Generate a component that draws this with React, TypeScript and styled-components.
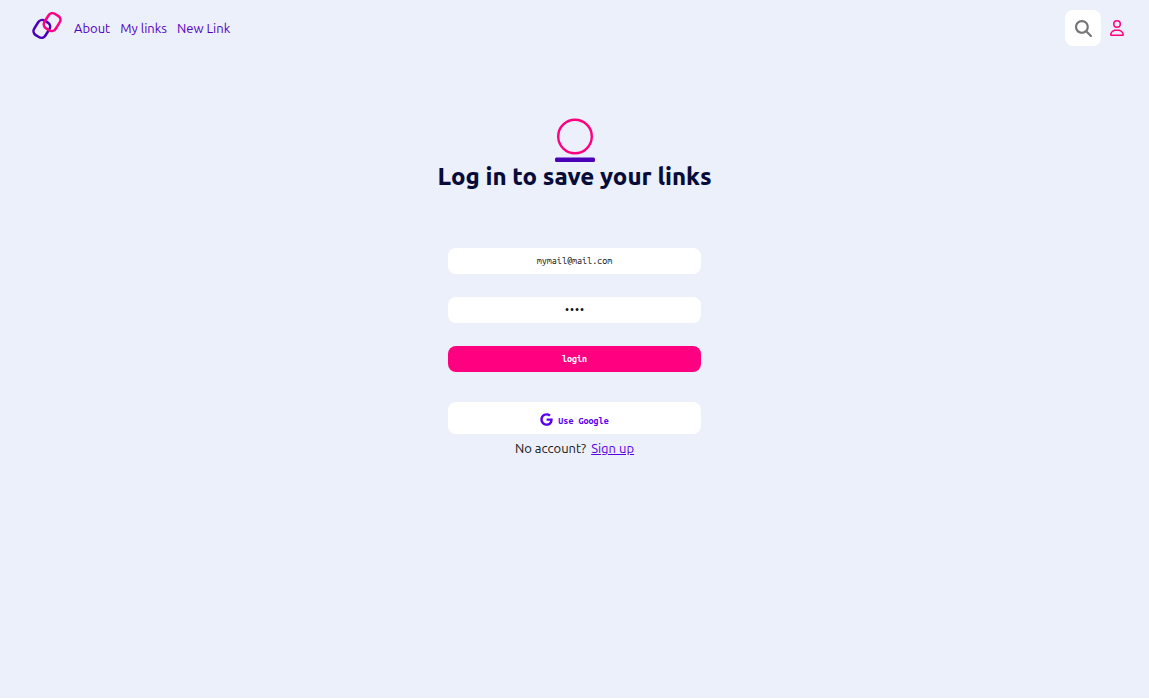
import React from "react";
import styled, { createGlobalStyle } from "styled-components";
import { FaGoogle, FaMagnifyingGlass, FaRegUser } from "react-icons/fa6";

const GlobalStyle = createGlobalStyle`
  * { box-sizing: border-box; }
  body {
    margin: 0;
    background: #fff;
    color: #151515;
    font-family: Ubuntu, "Noto Sans", sans-serif;
    font-size: 13px;
    line-height: 20px;
  }
`;

const Page = styled.div`
  min-height: calc(100vh - 1px);
  background: #ebf0fb;
`;

const Header = styled.header`
  display: flex;
  align-items: center;
  justify-content: space-between;
  height: 56px;
  padding: 0 24px 0 32px;
`;

const Nav = styled.nav`
  display: flex;
  align-items: center;
  gap: 10px;
`;

const NavLink = styled.a`
  color: #5300bf;
  text-decoration: none;
`;

const HomeLink = styled.a`
  display: flex;
  margin-bottom: 4px;
  margin-right: 2px;
`;

const Tools = styled.div`
  display: flex;
  align-items: center;
  gap: 8px;
`;

const SearchButton = styled.button`
  display: grid;
  place-items: center;
  width: 36px;
  height: 36px;
  padding: 0;
  border: 0;
  border-radius: 8px;
  background: #fff;
  color: #757575;
  font-size: 17px;
`;

const AccountLink = styled.a`
  display: flex;
  color: #ff0080;
  font-size: 16px;
`;

const Main = styled.main`
  display: flex;
  flex-direction: column;
  align-items: center;
  padding: 62px 16px 0;
`;

const Title = styled.h1`
  margin: 0;
  color: #080c38;
  font-size: 24px;
  font-weight: 800;
  line-height: 30px;
  text-align: center;
`;

const Form = styled.form`
  display: flex;
  flex-direction: column;
  gap: 23px;
  width: 100%;
  max-width: 253px;
  margin-top: 56px;
`;

const Field = styled.input`
  width: 100%;
  height: 26px;
  padding: 0 8px;
  border: 0;
  border-radius: 8px;
  background: #fff;
  color: #151515;
  font-family: "Ubuntu Mono", "DejaVu Sans Mono", monospace;
  font-size: 9px;
  text-align: center;
`;

const Button = styled.button<{ $variant: "primary" | "plain" }>`
  display: flex;
  align-items: baseline;
  justify-content: center;
  gap: 5px;
  width: 100%;
  height: ${(p) => (p.$variant === "primary" ? "26px" : "32px")};
  margin-top: ${(p) => (p.$variant === "primary" ? "0" : "7px")};
  padding: ${(p) => (p.$variant === "primary" ? "7px 0" : "11px 0 0")};
  border: 0;
  border-radius: 8px;
  background: ${(p) => (p.$variant === "primary" ? "#ff0080" : "#fff")};
  color: ${(p) => (p.$variant === "primary" ? "#fff" : "#5b00f0")};
  font-family: "Ubuntu Mono", "DejaVu Sans Mono", monospace;
  font-size: 9px;
  font-weight: 700;
  line-height: 12px;
`;

const GoogleIcon = styled(FaGoogle)`
  align-self: flex-start;
  width: 13px;
  height: 13px;
`;

const GoogleLabel = styled.span`
  padding-top: 2px;
`;

const Prompt = styled.p`
  display: flex;
  gap: 5px;
  margin: 4px 0 0;
`;

const SignUpLink = styled.a`
  color: #5b00e6;
`;

function Logo() {
  return (
    <svg width="30" height="30" viewBox="0 0 30 30" fill="none" strokeWidth="2.5" aria-hidden="true">
      <rect x="3.2" y="9.4" width="13.2" height="17" rx="4.8" stroke="#4b00b8" transform="rotate(32 9.8 17.9)" />
      <rect x="13.5" y="2.6" width="13.2" height="17" rx="4.8" stroke="#ff0080" transform="rotate(32 20.1 11.1)" />
    </svg>
  );
}

function Emblem() {
  return (
    <svg width="40" height="44" viewBox="0 0 40 44" aria-hidden="true">
      <circle cx="20" cy="18.5" r="16.8" fill="none" stroke="#ff0080" strokeWidth="2.4" />
      <rect y="39.5" width="40" height="4.5" rx="1.5" fill="#4b00b8" />
    </svg>
  );
}

export default function App() {
  return (
    <>
      <GlobalStyle />
      <Page>
        <Header>
          <Nav>
            <HomeLink href="#home" aria-label="Home"><Logo /></HomeLink>
            <NavLink href="#about">About</NavLink>
            <NavLink href="#links">My links</NavLink>
            <NavLink href="#new">New Link</NavLink>
          </Nav>
          <Tools>
            <SearchButton type="button" aria-label="Search"><FaMagnifyingGlass /></SearchButton>
            <AccountLink href="#account" aria-label="Account"><FaRegUser /></AccountLink>
          </Tools>
        </Header>
        <Main>
          <Emblem />
          <Title>Log in to save your links</Title>
          <Form onSubmit={(e) => e.preventDefault()}>
            <Field type="email" aria-label="Email" defaultValue="mymail@mail.com" />
            <Field type="password" aria-label="Password" defaultValue="pass" />
            <Button $variant="primary" type="submit">login</Button>
            <Button $variant="plain" type="button">
              <GoogleIcon />
              <GoogleLabel>Use Google</GoogleLabel>
            </Button>
          </Form>
          <Prompt>
            No account?
            <SignUpLink href="#signup">Sign up</SignUpLink>
          </Prompt>
        </Main>
      </Page>
    </>
  );
}
